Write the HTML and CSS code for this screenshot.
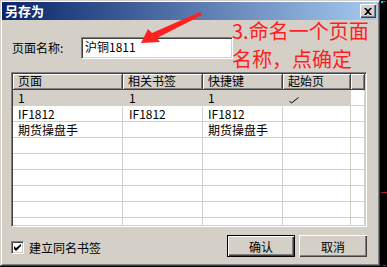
FILE: index.html
```html
<!DOCTYPE html>
<html lang="zh-CN">

<head>
    <meta charset="UTF-8">
    <title>另存为</title>
    <link rel="stylesheet" href="styles.css">
</head>

<body>
    <div class="screen">
        <div class="dialog">
            <div class="titlebar">
                <span class="title">另存为</span>
                <span class="close-btn">
                    <svg width="8" height="7" viewBox="0 0 8 7">
                        <path d="M0 0h2l2 2 2-2h2L5 3.5 8 7H6L4 5 2 7H0l3-3.5z" fill="#000" />
                    </svg>
                </span>
            </div>

            <div class="content">
                <div class="name-row">
                    <span class="name-label">页面名称:</span>
                    <div class="name-input">沪铜1811</div>
                </div>

                <div class="list">
                    <div class="list-head">
                        <div class="head-cell">页面</div>
                        <div class="head-cell">相关书签</div>
                        <div class="head-cell">快捷键</div>
                        <div class="head-cell">起始页</div>
                        <div class="head-cell"></div>
                    </div>
                    <div class="list-row selected">
                        <div class="cell">1</div>
                        <div class="cell">1</div>
                        <div class="cell">1</div>
                        <div class="cell">
                            <svg class="tick" width="10" height="7" viewBox="0 0 10 7">
                                <polyline points="0.5,4 2.5,6 9.5,0.5" fill="none" stroke="#000" stroke-width="1" />
                            </svg>
                        </div>
                        <div class="cell"></div>
                    </div>
                    <div class="list-row">
                        <div class="cell">IF1812</div>
                        <div class="cell">IF1812</div>
                        <div class="cell">IF1812</div>
                        <div class="cell"></div>
                        <div class="cell"></div>
                    </div>
                    <div class="list-row">
                        <div class="cell">期货操盘手</div>
                        <div class="cell"></div>
                        <div class="cell">期货操盘手</div>
                        <div class="cell"></div>
                        <div class="cell"></div>
                    </div>
                    <div class="list-row"><div class="cell"></div><div class="cell"></div><div class="cell"></div><div class="cell"></div><div class="cell"></div></div>
                    <div class="list-row"><div class="cell"></div><div class="cell"></div><div class="cell"></div><div class="cell"></div><div class="cell"></div></div>
                    <div class="list-row"><div class="cell"></div><div class="cell"></div><div class="cell"></div><div class="cell"></div><div class="cell"></div></div>
                    <div class="list-row"><div class="cell"></div><div class="cell"></div><div class="cell"></div><div class="cell"></div><div class="cell"></div></div>
                    <div class="list-row"><div class="cell"></div><div class="cell"></div><div class="cell"></div><div class="cell"></div><div class="cell"></div></div>
                    <div class="list-row"><div class="cell"></div><div class="cell"></div><div class="cell"></div><div class="cell"></div><div class="cell"></div></div>
                </div>

                <div class="footer">
                    <label class="check">
                        <span class="check-box">
                            <svg width="7" height="7" viewBox="0 0 7 7">
                                <path d="M0 2v3l2 2 5-5V-0L2 4z" fill="#000" />
                            </svg>
                        </span>
                        建立同名书签
                    </label>
                    <div class="buttons">
                        <button class="btn default">确认</button>
                        <button class="btn">取消</button>
                    </div>
                </div>
            </div>
        </div>

        <svg class="arrow" width="210" height="50" viewBox="0 0 210 50">
            <polygon points="141,43 148,29 152,33 200,12 202,15 157,38 160,42" fill="#ff2020" />
        </svg>
        <div class="note">3.命名一个页面<br>名称，点确定</div>

        <span class="px-cyan"></span>
        <span class="px-red"></span>
        <span class="red-line"></span>
        <span class="red-dots"></span>
    </div>
</body>

</html>
```

FILE: styles.css
```css
* {
    margin: 0;
    padding: 0;
    box-sizing: border-box;
}

body {
    background: #000;
    font-family: "Noto Sans CJK SC", "Liberation Sans", sans-serif;
    font-size: 12px;
    color: #000;
}

.screen {
    position: relative;
    width: 387px;
    height: 267px;
    overflow: hidden;
}

.dialog {
    width: 380px;
    height: 266px;
    background: #d4d0c8;
    border: 1px solid;
    border-color: #d4d0c8 #404040 #404040 #d4d0c8;
    box-shadow: inset 1px 1px #fff, inset -1px -1px #808080;
    padding: 1px;
}

/* title bar */
.titlebar {
    height: 18px;
    background: linear-gradient(to right, #0a246a, #a6caf0);
    display: flex;
    align-items: center;
    justify-content: space-between;
    padding: 0 2px 0 3px;
}

.title {
    color: #fff;
    font-weight: bold;
    font-size: 13px;
    line-height: 16px;
}

.close-btn {
    width: 16px;
    height: 14px;
    background: #d4d0c8;
    box-shadow: inset 1px 1px #fff, inset -1px -1px #404040, inset -2px -2px #808080;
    display: flex;
    align-items: center;
    justify-content: center;
}

/* body */
.content {
    padding-left: 9px;
}

.name-row {
    margin-top: 17px;
    height: 22px;
    display: flex;
    align-items: center;
    padding-left: 1px;
}

.name-label {
    width: 69px;
    line-height: 14px;
}

.name-input {
    width: 152px;
    height: 22px;
    background: #fff;
    border: 1px solid;
    border-color: #808080 #fff #fff #808080;
    box-shadow: inset 1px 1px #404040, inset -1px -1px #d4d0c8;
    padding: 1px 0 0 3px;
    line-height: 16px;
}

/* list view */
.list {
    margin-top: 13px;
    width: 356px;
    height: 155px;
    background: #fff;
    border: 1px solid;
    border-color: #808080 #fff #fff #808080;
    box-shadow: inset 1px 1px #404040, inset -1px -1px #d4d0c8;
    padding: 1px;
    overflow: hidden;
}

.list-head,
.list-row {
    display: grid;
    grid-template-columns: 110px 80px 80px 68px 1fr;
}

.head-cell {
    height: 16px;
    background: #d4d0c8;
    border-right: 1px solid #404040;
    border-bottom: 1px solid #404040;
    box-shadow: inset 1px 1px #fff, inset -1px -1px #808080;
    padding-left: 5px;
    line-height: 14px;
    white-space: nowrap;
}

.cell {
    height: 16px;
    border-right: 1px solid #d4d0c8;
    border-bottom: 1px solid #d4d0c8;
    padding-left: 5px;
    line-height: 15px;
    white-space: nowrap;
}

.list-row .cell:nth-child(2) {
    padding-left: 6px;
}

.selected .cell {
    background: #d4d0c8;
}

.selected .cell:last-child {
    background: #fff;
}

.tick {
    display: block;
    margin: 7px 0 0 1px;
}

/* footer */
.footer {
    margin-top: 8px;
    width: 356px;
    display: flex;
    justify-content: space-between;
    align-items: flex-start;
}

.check {
    margin-top: 6px;
    display: flex;
    align-items: center;
    gap: 5px;
    line-height: 13px;
}

.check-box {
    width: 13px;
    height: 13px;
    background: #fff;
    border: 1px solid;
    border-color: #808080 #fff #fff #808080;
    box-shadow: inset 1px 1px #404040, inset -1px -1px #d4d0c8;
    display: flex;
    align-items: center;
    justify-content: center;
}

.buttons {
    display: flex;
    gap: 4px;
}

.btn {
    width: 68px;
    height: 22px;
    background: #d4d0c8;
    border: none;
    font-family: inherit;
    font-size: 12px;
    color: #000;
    box-shadow: inset 1px 1px #fff, inset -1px -1px #404040, inset -2px -2px #808080;
}

.btn.default {
    border: 1px solid #000;
}

/* annotation */
.arrow {
    position: absolute;
    left: 0;
    top: 0;
}

.note {
    position: absolute;
    left: 232px;
    top: 17px;
    font-size: 20px;
    line-height: 28px;
    color: #ff1e1e;
    white-space: nowrap;
}

.px-cyan {
    position: absolute;
    left: 381px;
    top: 1px;
    width: 2px;
    height: 2px;
    background: #00d8f0;
}

.px-red {
    position: absolute;
    left: 383px;
    top: 1px;
    width: 3px;
    height: 1px;
    background: #e02020;
}

.red-line {
    position: absolute;
    left: 381px;
    top: 192px;
    width: 6px;
    height: 1px;
    background: #c01818;
}

.red-dots {
    position: absolute;
    left: 383px;
    top: 265px;
    width: 3px;
    height: 1px;
    background: #c01818;
}
```
